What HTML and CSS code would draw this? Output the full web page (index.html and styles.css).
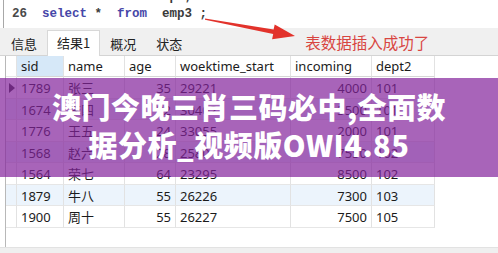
FILE: index.html
```html
<!DOCTYPE html>
<html lang="zh">
<head>
<meta charset="utf-8">
<link rel="stylesheet" href="styles.css">
</head>
<body>
<div class="page">
  <div class="editor">
    <div class="code-lines">
      <div class="line"><span class="ln">25</span>  <span class="kw">select</span> *  <span class="kw">from</span> dept;</div>
      <div class="line"><span class="ln">26</span>  <span class="kw">select</span> *  <span class="kw">from</span>  emp3 ;</div>
    </div>
  </div>
  <div class="tabs">
    <div class="tab">信息</div>
    <div class="tab active">结果1</div>
    <div class="tab">概况</div>
    <div class="tab">状态</div>
    <div class="msg">表数据插入成功了</div>
  </div>
  <div class="result">
    <div class="grid">
      <div class="g"></div>
      <div class="h sel">sid</div>
      <div class="h">name</div>
      <div class="h">age</div>
      <div class="h">woektime_start</div>
      <div class="h">incoming</div>
      <div class="h">dept2</div>

      <div class="g"><span class="cur"></span></div>
      <div class="c">1789</div><div class="c">张三</div><div class="c r">35</div><div class="c">29221</div><div class="c r">4000</div><div class="c">101</div>

      <div class="g alt"></div>
      <div class="c alt">1674</div><div class="c alt">李四</div><div class="c r alt">22</div><div class="c alt">30402</div><div class="c r alt">3500</div><div class="c alt">101</div>

      <div class="g"></div>
      <div class="c">1776</div><div class="c">王五</div><div class="c r">24</div><div class="c">33055</div><div class="c r">2000</div><div class="c">101</div>

      <div class="g alt"></div>
      <div class="c alt">1568</div><div class="c alt">赵六</div><div class="c r alt">28</div><div class="c alt">25801</div><div class="c r alt">7550</div><div class="c alt">102</div>

      <div class="g"></div>
      <div class="c">1564</div><div class="c">荣七</div><div class="c r">64</div><div class="c">23295</div><div class="c r">8500</div><div class="c">102</div>

      <div class="g alt"></div>
      <div class="c alt">1879</div><div class="c alt">牛八</div><div class="c r alt">55</div><div class="c alt">26226</div><div class="c r alt">7300</div><div class="c alt">103</div>

      <div class="g"></div>
      <div class="c">1900</div><div class="c">周十</div><div class="c r">55</div><div class="c">26227</div><div class="c r">7500</div><div class="c">105</div>
    </div>
  </div>
  <div class="status"></div>

  <svg class="arrow" width="498" height="60" viewBox="0 0 498 60">
    <polygon points="205,18.4 273.6,29.6 274.7,24.6 295,36 272.1,39.2 273.2,34.0 205,19.8" fill="#e2322b"/>
  </svg>

  <div class="banner">
    <div class="banner-text">澳门今晚三肖三码必中,全面数<br>据分析_视频版OWI4.85</div>
  </div>
</div>
</body>
</html>
```

FILE: styles.css
```css
html, body {
  margin: 0;
  padding: 0;
  background: #ffffff;
}

.page {
  position: relative;
  width: 498px;
  height: 253px;
  overflow: hidden;
  font-family: "Noto Sans", "Noto Sans CJK SC", sans-serif;
  color: #1b1b1b;
}

.editor {
  height: 28px;
  margin-left: 3px;
  border-left: 1px solid #a8a8a8;
  overflow: hidden;
  background: #fff;
}

.code-lines {
  margin-top: -11px;
  padding-left: 8px;
  font-family: "Liberation Mono", monospace;
  font-size: 12.5px;
  font-weight: 700;
  line-height: 17px;
  color: #3a3a3a;
}

.line {
  white-space: pre;
  height: 17px;
}

.ln { color: #4a4a4a; }
.kw { color: #4646a8; }

.tabs {
  height: 28px;
  background: #f0f0f0;
  border-bottom: 1px solid #d4d4d4;
  display: flex;
  align-items: flex-end;
  padding-left: 1px;
  box-sizing: border-box;
  font-family: "Noto Sans CJK SC", sans-serif;
}

.tab {
  padding: 0 9px;
  height: 25px;
  line-height: 23px;
  font-size: 13px;
  color: #222;
  box-sizing: border-box;
  border: 1px solid transparent;
  border-bottom: none;
  margin-bottom: -1px;
}

.tab.active {
  background: #ffffff;
  border-color: #d8d8d8;
  height: 26px;
  line-height: 24px;
}

.msg {
  margin-left: 113px;
  align-self: center;
  font-size: 15.5px;
  color: #d84541;
  line-height: 20px;
  margin-top: 1px;
}

.result {
  height: 191px;
  margin-left: 5px;
  border-left: 1px solid #b8b8b8;
  box-sizing: border-box;
}

.grid {
  display: grid;
  grid-template-columns: 11px 47px 61px 51px 115px 81px 63px;
  grid-template-rows: 21px repeat(7, 21.5px);
  width: 429px;
  font-size: 13px;
}

.grid > div {
  box-sizing: border-box;
  border-right: 1px solid #e2e2e2;
  border-bottom: 1px solid #e6e6e6;
  white-space: nowrap;
  overflow: hidden;
}

.g {
  position: relative;
}

.h {
  padding: 0 3px 0 4px;
  line-height: 20px;
  background: #fff;
  border-bottom-color: #d6d6d6 !important;
}

.h.sel {
  background: #d6e8f8;
}

.c {
  padding: 0 3px 0 4px;
  line-height: 21px;
  padding-top: 1px;
}

.c.r {
  text-align: right;
  padding-right: 4px;
}

.alt {
  background: #ecf4fc;
}

.cur {
  position: absolute;
  left: 3px;
  top: 6px;
  width: 0;
  height: 0;
  border-top: 5px solid transparent;
  border-bottom: 5px solid transparent;
  border-left: 6px solid #3a3a3a;
}

.status {
  height: 6px;
  background: #efefef;
  border-top: 1px solid #e2e2e2;
  box-sizing: border-box;
}

.arrow {
  position: absolute;
  left: 0;
  top: 0;
}

.banner {
  position: absolute;
  left: 0;
  top: 78px;
  width: 498px;
  height: 99px;
  background: rgba(131, 34, 155, 0.7);
}

.banner-text {
  padding-top: 9px;
  text-align: center;
  color: #ffffff;
  font-family: "Noto Sans CJK SC", sans-serif;
  font-weight: 900;
  font-size: 29px;
  line-height: 38px;
  letter-spacing: 0.5px;
}
```
